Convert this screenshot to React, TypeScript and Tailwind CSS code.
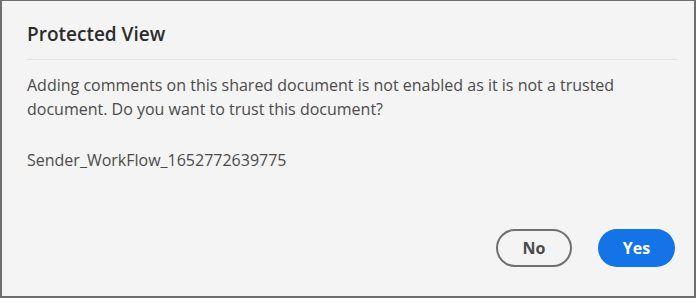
export default function App() {
  return (
    <div className="w-[699px] h-[302px] bg-white">
      <div
        className="w-[696px] h-[298px] bg-[#f4f4f4] border-l-2 border-t border-r-2 border-b-2 border-[#6f6f6f] flex flex-col pl-[25px] pr-[17px]"
        style={{ fontFamily: '"Open Sans", "Noto Sans", sans-serif' }}
      >
        <h1 className="pt-[21px] pb-[12px] text-[19px] leading-[25px] font-semibold text-[#2c2c2c] border-b border-[#e3e3e3]">
          Protected View
        </h1>
        <p className="mt-[13px] text-[16px] leading-[24px] text-[#4b4b4b]">
          Adding comments on this shared document is not enabled as it is not a trusted
          <br />
          document. Do you want to trust this document?
        </p>
        <p className="mt-[27px] text-[16px] leading-[24px] text-[#4b4b4b]">Sender_WorkFlow_1652772639775</p>
        <div className="mt-auto mb-[29px] flex justify-end gap-[26px] pr-[2px]">
          <button className="w-[76px] h-[38px] rounded-full border-2 border-[#707070] text-[16px] font-bold text-[#4b4b4b]">
            No
          </button>
          <button className="w-[77px] h-[38px] rounded-full bg-[#1473e6] text-[16px] font-bold text-white">
            Yes
          </button>
        </div>
      </div>
    </div>
  );
}
